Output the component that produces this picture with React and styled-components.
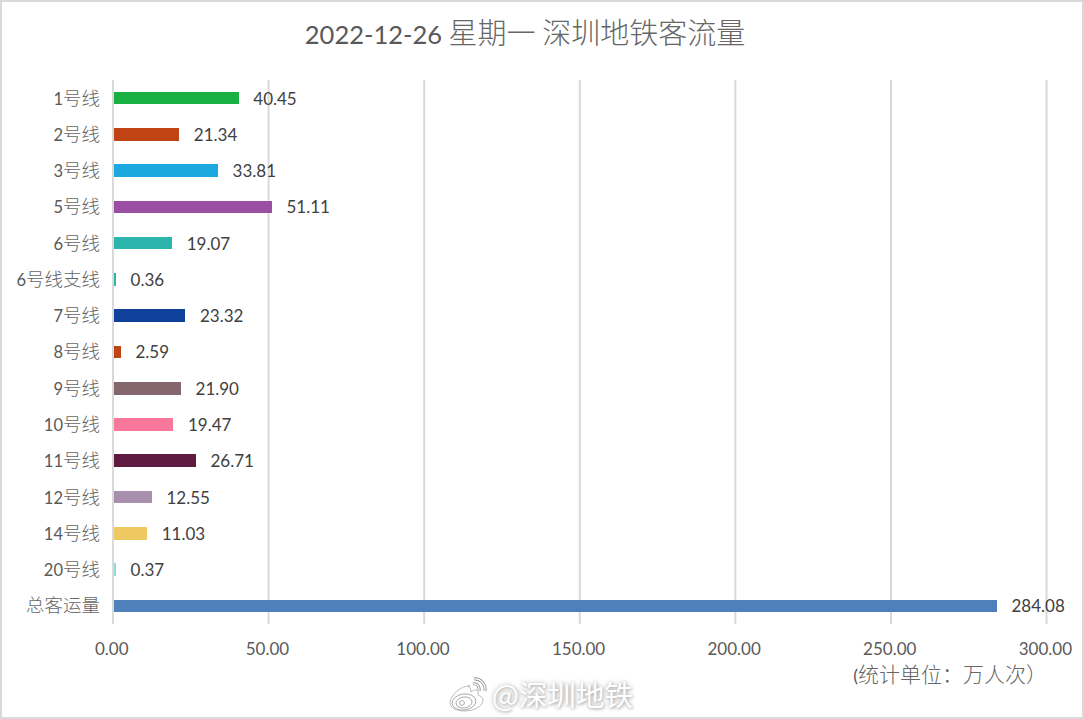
import React from 'react';
import styled, { createGlobalStyle } from 'styled-components';

const GlobalStyle = createGlobalStyle`
  html, body {
    margin: 0;
    padding: 0;
    background: #fff;
  }
`;

const FONT = `Lato, "Noto Sans CJK SC", sans-serif`;
const UNIT = 3.112;

const lines = [
  { name: '1号线', value: 40.45, color: '#1bb044' },
  { name: '2号线', value: 21.34, color: '#bf4313' },
  { name: '3号线', value: 33.81, color: '#1ca9e0' },
  { name: '5号线', value: 51.11, color: '#9b4fa3' },
  { name: '6号线', value: 19.07, color: '#2bb5ad' },
  { name: '6号线支线', value: 0.36, color: '#2bb5ad' },
  { name: '7号线', value: 23.32, color: '#10419a' },
  { name: '8号线', value: 2.59, color: '#bf4313' },
  { name: '9号线', value: 21.9, color: '#85666e' },
  { name: '10号线', value: 19.47, color: '#f8779b' },
  { name: '11号线', value: 26.71, color: '#5e1a3f' },
  { name: '12号线', value: 12.55, color: '#a98fae' },
  { name: '14号线', value: 11.03, color: '#eec860' },
  { name: '20号线', value: 0.37, color: '#8fdbe0' },
  { name: '总客运量', value: 284.08, color: '#4f80bb' },
];

const ticks = ['0.00', '50.00', '100.00', '150.00', '200.00', '250.00', '300.00'];

const Frame = styled.div`
  position: relative;
  width: 1084px;
  height: 719px;
  box-sizing: border-box;
  border: 2px solid #d9d9d9;
  background: #fff;
  font-family: ${FONT};
  overflow: hidden;
`;

const Han = styled.span`
  font-size: ${(p) => p.$size}px;
  font-weight: 300;
  line-height: 1;
  color: #666;
`;

const Title = styled.h1`
  margin: 0;
  height: 78px;
  padding: 14px 34px 0 0;
  box-sizing: border-box;
  text-align: center;
  font-size: 25.5px;
  line-height: 36px;
  font-weight: 400;
  color: #595959;
`;

const Chart = styled.div`
  display: flex;
  height: 544px;
`;

const Labels = styled.ul`
  width: 110px;
  margin: 0;
  padding: 0;
  list-style: none;
  display: grid;
  grid-template-rows: repeat(15, minmax(0, 1fr));
`;

const Label = styled.li`
  display: flex;
  align-items: center;
  justify-content: flex-end;
  padding: 1px 12px 0 0;
  font-size: 16.5px;
  color: #595959;
  white-space: nowrap;
`;

const Plot = styled.div`
  width: 936px;
  display: grid;
  grid-template-rows: repeat(15, minmax(0, 1fr));
  background-image: linear-gradient(to right, #d9d9d9 2px, transparent 2px);
  background-size: 155.6px 100%;
`;

const Row = styled.div`
  display: flex;
  align-items: center;
  gap: 14.6px;
  padding-left: 2px;
`;

const Bar = styled.div`
  height: 12.6px;
  background: ${(p) => p.$color};
`;

const Value = styled.span`
  font-size: 17px;
  color: #404040;
`;

const Axis = styled.div`
  display: flex;
  margin: 13px 0 0 32px;
`;

const Tick = styled.span`
  flex: none;
  width: 155.6px;
  text-align: center;
  font-size: 17px;
  line-height: 24px;
  color: #595959;
`;

const Unit = styled.div`
  margin: 1px 35px 0 0;
  text-align: right;
  font-size: 18px;
  line-height: 26px;
  color: #595959;
`;

const Watermark = styled.div`
  position: absolute;
  left: 446px;
  bottom: 5px;
  display: flex;
  align-items: center;
  gap: 3px;
  font-family: "Noto Sans CJK SC", sans-serif;
  font-size: 28.5px;
  line-height: 36px;
  color: #fff;
  text-shadow: 0 0 5px #b5b5b5, 1px 1px 3px #b5b5b5;
`;

// splits a string so the Chinese runs can get their own size, the latin font runs small next to them
function Mixed({ text, size }) {
  return text.split(/([\u3000-\u9fff\uff00-\uffef]+)/).map((part, i) =>
    i % 2 ? (
      <Han key={i} $size={size}>
        {part}
      </Han>
    ) : (
      part
    )
  );
}

function WeiboLogo() {
  return (
    <svg width="41" height="35" viewBox="0 0 41 35" fill="none" stroke="#a3a3a3" strokeWidth="0.9">
      <path
        d="M22 9C14 8 2 18 2 26c0 5 7 8 14 8 9 0 19-4 19-11 0-3-3-4-5-5 1-3-1-6-3-5-1 0-2 1-4 2 0-3-1-5-3-6z"
        fill="#fff"
        stroke="#b5b5b5"
      />
      <ellipse cx="16" cy="25" rx="12" ry="8" transform="rotate(-8 16 25)" />
      <ellipse cx="16" cy="25.5" rx="8" ry="5.5" transform="rotate(-8 16 25.5)" />
      <circle cx="14" cy="26" r="2.4" />
      <path d="M25 7c4-1 7 3 6 7" stroke="#999" strokeWidth="3" />
      <path d="M25 7c4-1 7 3 6 7" stroke="#fff" strokeWidth="1.2" />
      <path d="M26 2c6-1 12 5 11 12" stroke="#999" strokeWidth="3" />
      <path d="M26 2c6-1 12 5 11 12" stroke="#fff" strokeWidth="1.2" />
    </svg>
  );
}

export default function App() {
  return (
    <>
      <GlobalStyle />
      <Frame>
        <Title>
          <Mixed text="2022-12-26 星期一 深圳地铁客流量" size={29} />
        </Title>
        <Chart>
          <Labels>
            {lines.map((line) => (
              <Label key={line.name}>
                <span>
                  <Mixed text={line.name} size={18.5} />
                </span>
              </Label>
            ))}
          </Labels>
          <Plot>
            {lines.map((line) => (
              <Row key={line.name}>
                <Bar $color={line.color} style={{ width: Math.max(2, line.value * UNIT - 1.2) }} />
                <Value>{line.value.toFixed(2)}</Value>
              </Row>
            ))}
          </Plot>
        </Chart>
        <Axis>
          {ticks.map((tick) => (
            <Tick key={tick}>{tick}</Tick>
          ))}
        </Axis>
        <Unit>
          <Mixed text={'(统计单位\uff1a万人次\uff09'} size={21} />
        </Unit>
        <Watermark>
          <WeiboLogo />
          @深圳地铁
        </Watermark>
      </Frame>
    </>
  );
}
